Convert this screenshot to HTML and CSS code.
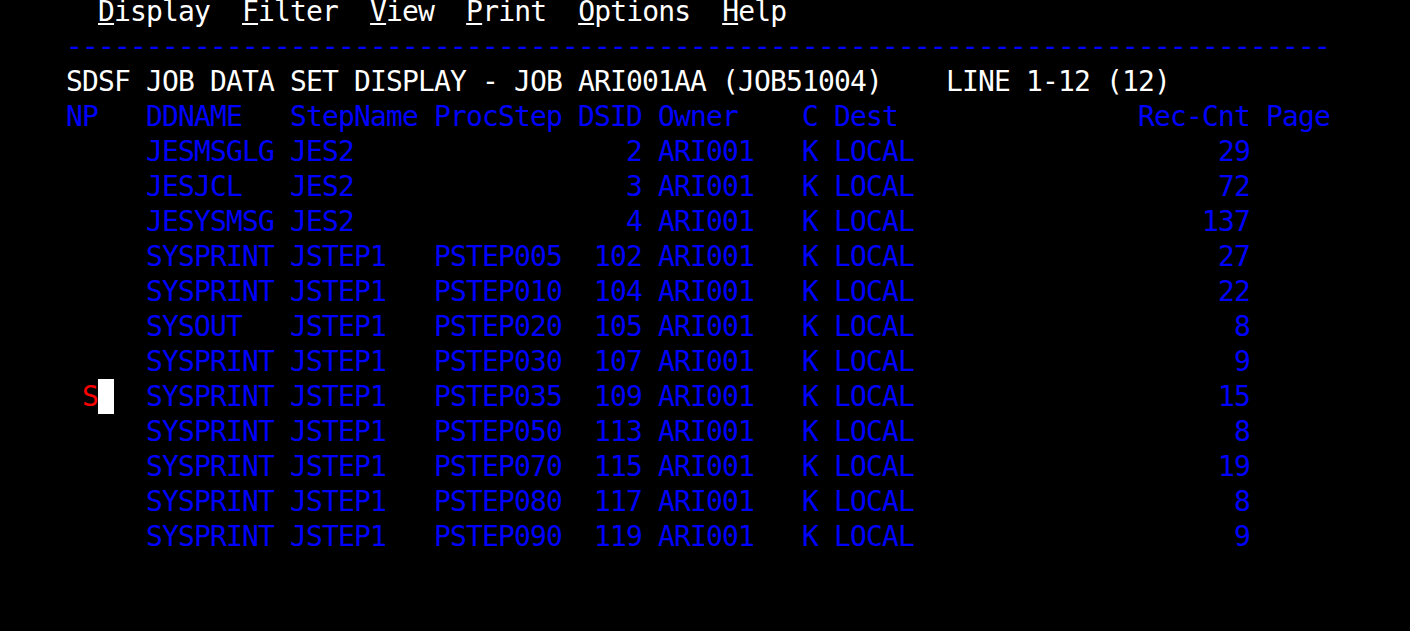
FILE: index.html
```html
<!DOCTYPE html>
<html lang="en">
<head>
<meta charset="utf-8">
<title>SDSF Job Data Set Display</title>
<link rel="stylesheet" href="styles.css">
</head>
<body>
<div class="screen">
  <div class="line white">  <span class="mn">D</span>isplay  <span class="mn">F</span>ilter  <span class="mn">V</span>iew  <span class="mn">P</span>rint  <span class="mn">O</span>ptions  <span class="mn">H</span>elp</div>
  <div class="line blue">-------------------------------------------------------------------------------</div>
  <div class="line white">SDSF JOB DATA SET DISPLAY - JOB ARI001AA (JOB51004)    LINE 1-12 (12)</div>
  <div class="table blue">
    <div class="row head">
      <span>NP</span><span>DDNAME</span><span>StepName</span><span>ProcStep</span><span class="r">DSID</span><span class="owner">Owner</span><span>C</span><span>Dest</span><span class="r">Rec-Cnt</span><span class="page">Page</span>
    </div>
    <div class="row"><span></span><span>JESMSGLG</span><span>JES2</span><span></span><span class="r">2</span><span class="owner">ARI001</span><span>K</span><span>LOCAL</span><span class="r">29</span><span class="page"></span></div>
    <div class="row"><span></span><span>JESJCL</span><span>JES2</span><span></span><span class="r">3</span><span class="owner">ARI001</span><span>K</span><span>LOCAL</span><span class="r">72</span><span class="page"></span></div>
    <div class="row"><span></span><span>JESYSMSG</span><span>JES2</span><span></span><span class="r">4</span><span class="owner">ARI001</span><span>K</span><span>LOCAL</span><span class="r">137</span><span class="page"></span></div>
    <div class="row"><span></span><span>SYSPRINT</span><span>JSTEP1</span><span>PSTEP005</span><span class="r">102</span><span class="owner">ARI001</span><span>K</span><span>LOCAL</span><span class="r">27</span><span class="page"></span></div>
    <div class="row"><span></span><span>SYSPRINT</span><span>JSTEP1</span><span>PSTEP010</span><span class="r">104</span><span class="owner">ARI001</span><span>K</span><span>LOCAL</span><span class="r">22</span><span class="page"></span></div>
    <div class="row"><span></span><span>SYSOUT</span><span>JSTEP1</span><span>PSTEP020</span><span class="r">105</span><span class="owner">ARI001</span><span>K</span><span>LOCAL</span><span class="r">8</span><span class="page"></span></div>
    <div class="row"><span></span><span>SYSPRINT</span><span>JSTEP1</span><span>PSTEP030</span><span class="r">107</span><span class="owner">ARI001</span><span>K</span><span>LOCAL</span><span class="r">9</span><span class="page"></span></div>
    <div class="row"><span class="np"> <span class="red">S</span><span class="cursor"></span></span><span>SYSPRINT</span><span>JSTEP1</span><span>PSTEP035</span><span class="r">109</span><span class="owner">ARI001</span><span>K</span><span>LOCAL</span><span class="r">15</span><span class="page"></span></div>
    <div class="row"><span></span><span>SYSPRINT</span><span>JSTEP1</span><span>PSTEP050</span><span class="r">113</span><span class="owner">ARI001</span><span>K</span><span>LOCAL</span><span class="r">8</span><span class="page"></span></div>
    <div class="row"><span></span><span>SYSPRINT</span><span>JSTEP1</span><span>PSTEP070</span><span class="r">115</span><span class="owner">ARI001</span><span>K</span><span>LOCAL</span><span class="r">19</span><span class="page"></span></div>
    <div class="row"><span></span><span>SYSPRINT</span><span>JSTEP1</span><span>PSTEP080</span><span class="r">117</span><span class="owner">ARI001</span><span>K</span><span>LOCAL</span><span class="r">8</span><span class="page"></span></div>
    <div class="row"><span></span><span>SYSPRINT</span><span>JSTEP1</span><span>PSTEP090</span><span class="r">119</span><span class="owner">ARI001</span><span>K</span><span>LOCAL</span><span class="r">9</span><span class="page"></span></div>
  </div>
</div>
</body>
</html>
```
FILE: styles.css
```css
html, body {
  margin: 0;
  padding: 0;
  background: #000;
  height: 100%;
  overflow: hidden;
}

.screen {
  margin-top: -6px;
  padding-left: 66px;
  font-family: "DejaVu Sans Mono", "Liberation Mono", monospace;
  font-size: 28px;
  letter-spacing: -0.857px;
  line-height: 35px;
}

.line {
  height: 35px;
  white-space: pre;
}

.white { color: #ffffff; }
.blue { color: #0000ff; }
.red { color: #ff0000; }

.mn {
  text-decoration: underline;
  text-decoration-thickness: 2px;
  text-underline-offset: 2px;
}

.row {
  display: grid;
  grid-template-columns: 80px 144px 144px 144px 64px 160px 32px 80px 336px 1fr;
  height: 35px;
}

.row > span {
  white-space: pre;
}

.r {
  text-align: right;
}

.owner,
.page {
  padding-left: 16px;
}

.cursor {
  display: inline-block;
  width: 16px;
  height: 35px;
  vertical-align: top;
  background: #ffffff;
}
```
